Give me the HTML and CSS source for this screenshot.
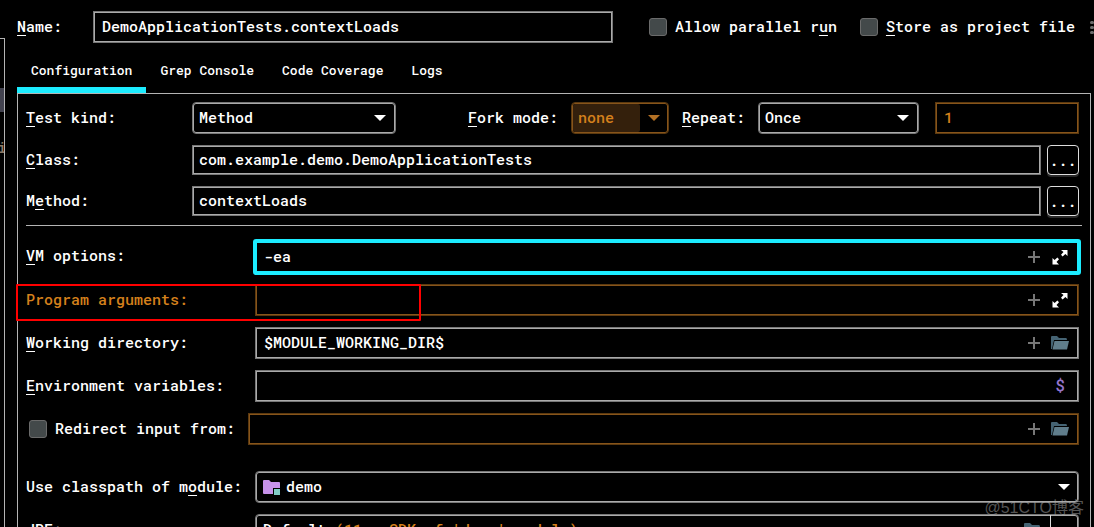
FILE: index.html
```html
<!DOCTYPE html>
<html lang="en">
<head>
<meta charset="utf-8">
<title>Run/Debug Configurations</title>
<link rel="stylesheet" href="styles.css">
</head>
<body>
<svg class="defs" aria-hidden="true">
  <symbol id="arrow" viewBox="0 0 12 6"><path d="M0 0H12L6 6Z" fill="currentColor"/></symbol>
  <symbol id="plus" viewBox="0 0 12 12"><path d="M0 6H12M6 0V12" stroke="currentColor" stroke-width="2"/></symbol>
  <symbol id="expand" viewBox="0 0 16 16"><path d="M9 1H15.500V7L13.400 5L10.600 7.400L9 5.800L11.500 3Z M0.500 9L2.600 11L5.400 8.600L7 10.200L4.500 13L7 15.500H0.500Z" fill="currentColor"/></symbol>
  <symbol id="folder" viewBox="0 0 18 14"><path d="M0 13V1Q0 0 1 0H6L8 2H15Q16 2 16 4H3L1 13Z" fill="#456373"/><path d="M3.500 5H18L16 13.500H1.500Z" fill="#607d8b"/></symbol>
  <symbol id="module" viewBox="0 0 17 15"><path d="M0 13V1Q0 0 1 0H6L8 2H16Q17 2 17 3V8H10V14H1Q0 14 0 13Z" fill="#c792ea"/><path d="M11 9H17V15H11Z" fill="#80cbc4"/></symbol>
</svg>
<aside class="tree"><div class="tree-selected"></div><span class="tree-text">i</span></aside>
<main class="editor">
  <header class="header">
    <label class="name-label" for="name"><u>N</u>ame:</label>
    <input class="box name" id="name" value="DemoApplicationTests.contextLoads">
    <label class="check parallel"><input type="checkbox"><span>Allow parallel r<u>u</u>n</span></label>
    <label class="check store"><input type="checkbox"><span><u>S</u>tore as project file</span></label>
    <button class="more" aria-label="More"><i></i><i></i><i></i></button>
  </header>
  <nav class="tabs">
    <button class="tab active">Configuration</button>
    <button class="tab">Grep Console</button>
    <button class="tab">Code Coverage</button>
    <button class="tab">Logs</button>
  </nav>
  <section class="panel">
    <div class="row kinds">
      <label class="short" for="kind"><u>T</u>est kind:</label>
      <div class="box combo kind"><select id="kind"><option>Method</option></select><svg class="arrow"><use href="#arrow"/></svg></div>
      <label class="fork-label" for="fork"><u>F</u>ork mode:</label>
      <div class="box combo fork orange"><select id="fork" disabled><option>none</option></select><svg class="arrow"><use href="#arrow"/></svg></div>
      <label class="repeat-label" for="repeat"><u>R</u>epeat:</label>
      <div class="box combo repeat"><select id="repeat"><option>Once</option></select><svg class="arrow"><use href="#arrow"/></svg></div>
      <input class="box count orange" aria-label="Repeat count" value="1" disabled>
    </div>
    <div class="row">
      <label class="short" for="class"><u>C</u>lass:</label>
      <input class="box low" id="class" value="com.example.demo.DemoApplicationTests">
      <button class="browse" aria-label="Browse class">...</button>
    </div>
    <div class="row">
      <label class="short" for="method">M<u>e</u>thod:</label>
      <input class="box low" id="method" value="contextLoads">
      <button class="browse" aria-label="Browse method">...</button>
    </div>
    <hr>
    <div class="row">
      <label class="long" for="vm"><u>V</u>M options:</label>
      <div class="box wide focused"><input id="vm" value="-ea"><svg class="plus"><use href="#plus"/></svg><svg class="expand"><use href="#expand"/></svg></div>
    </div>
    <div class="row marked">
      <label class="long amber" for="args">Program arguments:</label>
      <div class="box wide orange"><input id="args"><svg class="plus"><use href="#plus"/></svg><svg class="expand"><use href="#expand"/></svg></div>
      <div class="marker"></div>
    </div>
    <div class="row">
      <label class="long" for="dir"><u>W</u>orking directory:</label>
      <div class="box wide"><input id="dir" value="$MODULE_WORKING_DIR$"><svg class="plus"><use href="#plus"/></svg><svg class="folder"><use href="#folder"/></svg></div>
    </div>
    <div class="row">
      <label class="long" for="env"><u>E</u>nvironment variables:</label>
      <div class="box wide"><input id="env"><span class="dollar">$</span></div>
    </div>
    <div class="row">
      <label class="check redirect"><input type="checkbox"><span>Redirect input from:</span></label>
      <div class="box wide orange"><input aria-label="Input file" disabled><svg class="plus"><use href="#plus"/></svg><svg class="folder"><use href="#folder"/></svg></div>
    </div>
    <div class="row module-row">
      <label class="long" for="module">Use classpath of m<u>o</u>dule:</label>
      <div class="box combo wide-combo"><svg class="module"><use href="#module"/></svg><select id="module"><option>demo</option></select><svg class="arrow"><use href="#arrow"/></svg></div>
    </div>
    <div class="row">
      <label class="long" for="jre">JRE:</label>
      <button class="box combo wide-combo jre" id="jre" aria-haspopup="listbox"><span class="jre-text">Default <span class="amber">(11 - SDK of 'demo' module)</span></span><svg class="folder"><use href="#folder"/></svg><span class="jre-arrow"><svg class="arrow"><use href="#arrow"/></svg></span></button>
    </div>
  </section>
</main>
<div class="watermark">@51CTO博客</div>
</body>
</html>
```
FILE: styles.css
```css
* { box-sizing: border-box; }

body {
  margin: 0;
  height: 100vh;
  overflow: hidden;
  display: flex;
  background: #000;
  color: #fff;
  font: 500 15px/20px "Roboto Mono", "DejaVu Sans Mono", monospace;
}

input, select, button {
  font: inherit;
  color: inherit;
  background: none;
  border: 0;
  margin: 0;
  padding: 0;
  opacity: 1;
}

input { min-width: 0; }
select { appearance: none; flex: 1; min-width: 0; height: 100%; padding-bottom: 2px; }
svg { flex: none; }
u { text-underline-offset: 3px; text-decoration-thickness: 1px; }
.defs { position: absolute; width: 0; height: 0; }
.amber { color: #d5811c; }

.tree {
  width: 5px;
  flex: none;
  margin-top: 38px;
  padding-top: 49px;
  overflow: hidden;
  border: solid #b4b4b4;
  border-width: 1px 1px 0 0;
}
.tree-selected { height: 24px; background: #42424f; }
.tree-text {
  display: flex;
  justify-content: center;
  margin-top: 25px;
  color: #8a7a68;
}

.editor {
  flex: 1;
  min-width: 0;
  display: flex;
  flex-direction: column;
  padding-left: 12px;
}

.header { display: flex; align-items: center; padding-top: 11px; }
.name-label { width: 76px; padding-bottom: 2px; }
.name { flex: 1; }
.parallel { margin-left: 36px; }
.store { margin-left: 23px; }
.check { display: flex; align-items: center; gap: 8px; white-space: nowrap; }
.check span { padding-bottom: 2px; }
.check input {
  appearance: none;
  width: 18px;
  height: 18px;
  flex: none;
  background: #43494a;
  border: 1px solid #6b6b6b;
  border-radius: 3px;
}
.more { display: grid; gap: 2px; margin-left: 15px; width: 4px; overflow: hidden; }
.more i { width: 4px; height: 3px; border-radius: 2px; background: #6e6e6e; }

.box {
  height: 32px;
  border: 1px solid #777;
  box-shadow: inset 0 0 0 1px #aaa;
  padding: 0 8px;
}
input.box { padding-bottom: 2px; }
.box.orange {
  border-color: #5c3a10;
  box-shadow: inset 0 0 0 1px #87541a;
  color: #d5811c;
}

.tabs { display: flex; margin-top: 12px; }
.tab {
  height: 38px;
  padding: 0 14px 2px;
  font-size: 13px;
  border-bottom: 6px solid transparent;
}
.tab.active { border-color: #1cecff; }

.panel {
  flex: 1;
  display: flex;
  flex-direction: column;
  gap: 11px;
  margin-right: 3px;
  padding: 8px 8px 0;
  border: solid #b4b4b4;
  border-width: 1px 1px 0;
}
.row { display: flex; align-items: center; flex: none; padding-right: 3px; }
.row label { flex: none; white-space: nowrap; }
.short, .long, .fork-label, .repeat-label { padding-bottom: 2px; }
.short { width: 166px; }
.long { width: 229px; }

.combo { display: flex; align-items: center; padding: 0 8px 0 6px; border-radius: 4px; }
.kind, .repeat { padding-right: 9px; }
.arrow { width: 12px; height: 6px; }
.kind { flex: 1 1 204px; }
.fork-label { margin-left: 72px; width: 103px; }
.fork { width: 98px; padding-left: 1px; }
.fork select { background: #34200c; padding-left: 5px; height: 28px; margin-right: 8px; border-radius: 2px; }
.fork .arrow { color: #b37125; }
.repeat-label { margin-left: 13px; width: 76px; }
.repeat { flex: 1 1 161px; }
.count { flex: 1 1 144px; margin-left: 16px; }

.box.low { height: 30px; flex: 1; padding: 0 6px 2px; }
.browse {
  width: 32px;
  height: 30px;
  margin-left: 6px;
  border: 1px solid #ddd;
  border-radius: 4px;
  box-shadow: 0 2px 0 #292929;
}

hr { width: 100%; height: 1px; margin: -2px 0 2px; border: 0; background: #b4b4b4; flex: none; }

.wide { flex: 1; display: flex; align-items: center; padding-right: 9px; }
.wide input { flex: 1; height: 28px; padding-bottom: 2px; }
.wide.focused {
  height: 36px;
  margin: 0 -2px -2px;
  border: 4px solid #1cecff;
  border-radius: 3px;
  box-shadow: none;
  padding: 0 8px 0 7px;
}
.plus { width: 12px; height: 12px; color: #777; margin-right: 11px; }
.expand { width: 16px; height: 16px; color: #fff; margin: 0 1px; }
.folder { width: 18px; height: 14px; }
.dollar { width: 18px; padding-bottom: 2px; text-align: center; font-size: 16px; color: #9575cd; }

.marked { position: relative; }
.marker {
  position: absolute;
  left: -10px;
  top: 0;
  width: 405px;
  height: 37px;
  border: 2px solid #f00;
  border-radius: 1px;
  pointer-events: none;
}

.redirect { width: 222px; padding-left: 3px; }
.module-row { margin-top: 15px; }
.wide-combo { flex: 1; padding-left: 7px; }
.module { width: 17px; height: 15px; margin-right: 6px; }
.jre { text-align: left; }
.jre-text { flex: 1; padding-bottom: 2px; }
.jre-arrow {
  display: flex;
  align-items: center;
  height: 30px;
  margin-left: 8px;
  padding-left: 7px;
  border-left: 1px solid #ddd;
}

.watermark {
  position: absolute;
  right: 10px;
  bottom: 8px;
  color: rgba(170, 170, 170, 0.5);
  font: 16px/22px "Liberation Sans", "Noto Sans CJK SC", sans-serif;
}
```
